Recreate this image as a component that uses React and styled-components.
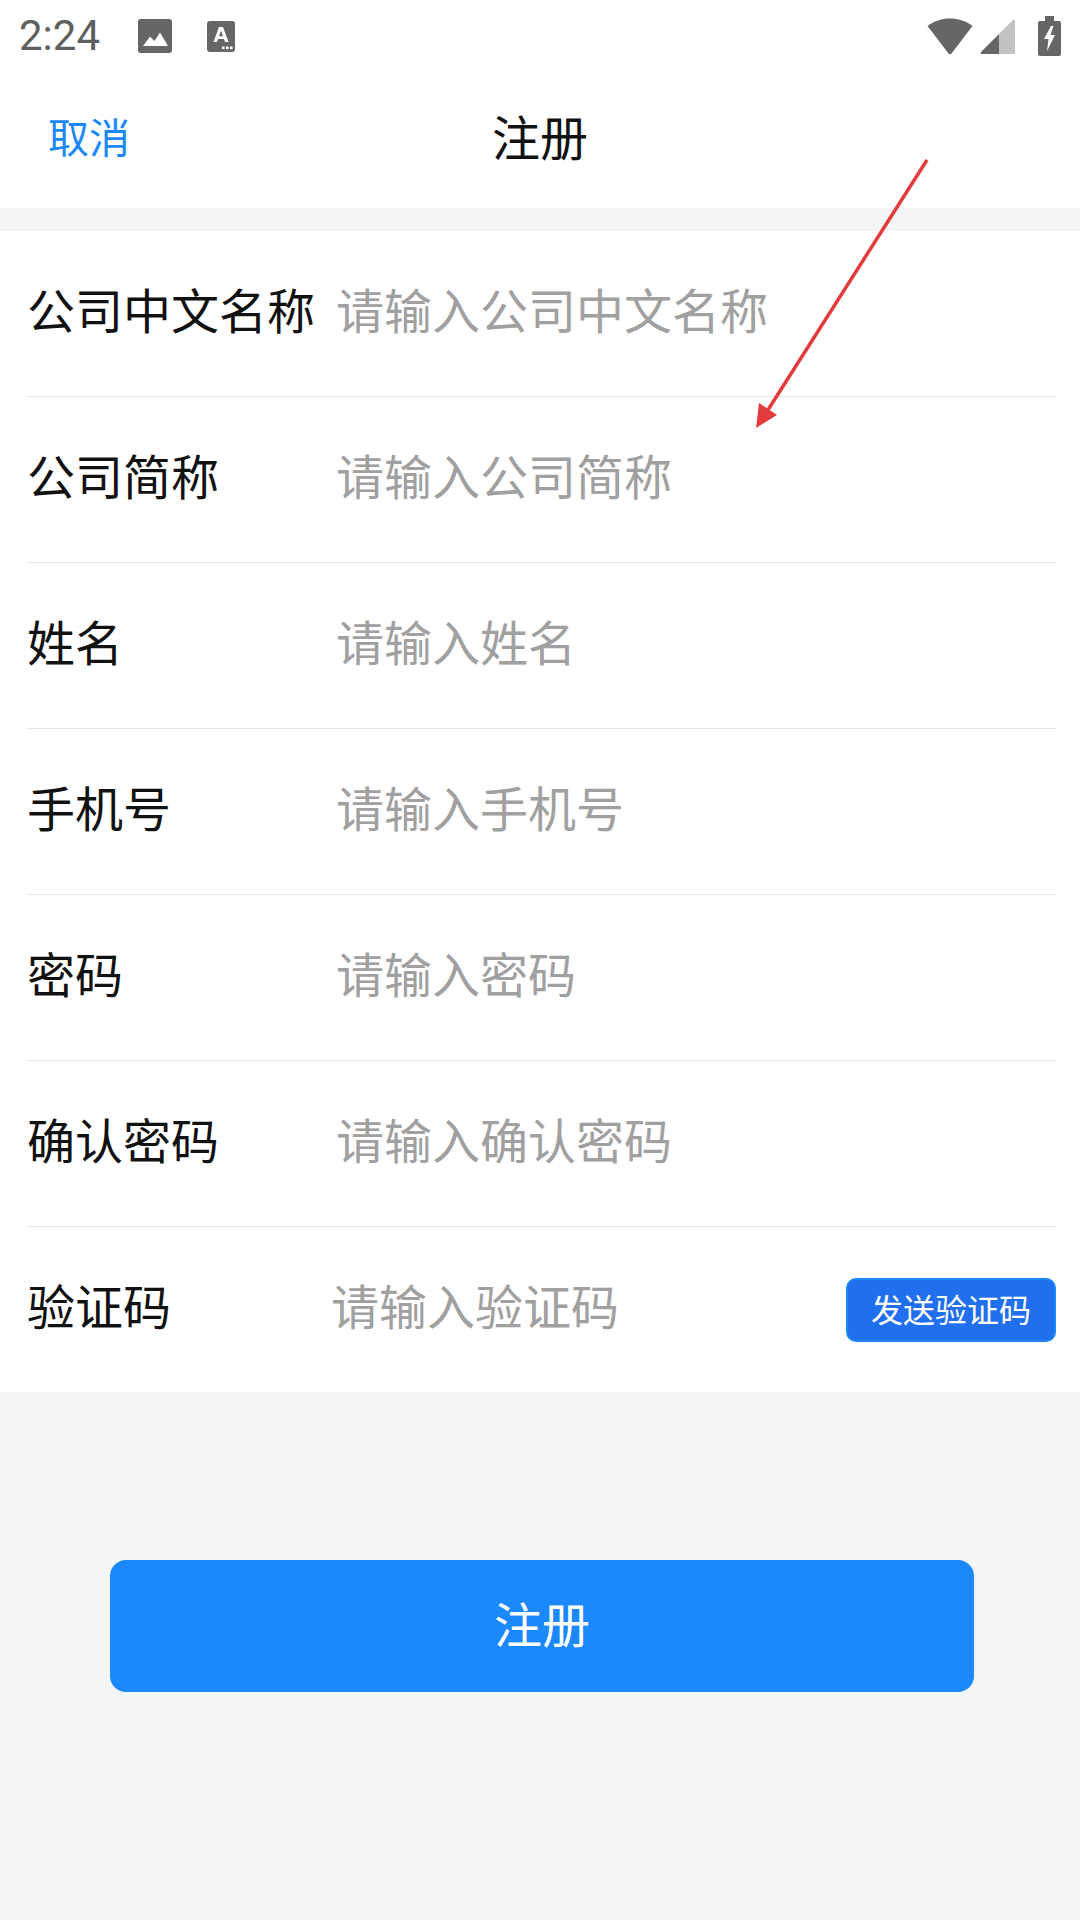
import React from "react";
import styled, { createGlobalStyle } from "styled-components";

const GlobalStyle = createGlobalStyle`
  html, body {
    margin: 0;
    padding: 0;
    background: #f3f5f7;
    font-family: "Noto Sans CJK SC", "Noto Sans", sans-serif;
  }
`;

const Page = styled.div`
  position: relative;
  width: 1080px;
  height: 1920px;
  overflow: hidden;
  background: #f3f5f7;
`;

const StatusBar = styled.div`
  height: 68px;
  box-sizing: border-box;
  padding: 4px 19px 0 19px;
  background: #fff;
  display: flex;
  align-items: center;
  color: #5f5f5f;
`;

const Time = styled.span`
  font-family: Roboto, sans-serif;
  font-size: 42px;
  font-weight: 400;
  line-height: 60px;
  width: 119px;
`;

const StatusIcons = styled.div`
  display: flex;
  align-items: center;
  gap: ${(p) => p.$gap || 0}px;
  margin-left: ${(p) => p.$left || 0};
`;

const NavBar = styled.div`
  height: 140px;
  box-sizing: border-box;
  padding: 0 48px 6px;
  background: #fff;
  display: grid;
  grid-template-columns: 1fr auto 1fr;
  align-items: center;
`;

const Cancel = styled.span`
  font-size: 41px;
  color: #1b88f8;
  line-height: 1;
`;

const Title = styled.span`
  font-size: 48px;
  color: #111;
  line-height: 1;
`;

const Form = styled.div`
  margin-top: 23px;
  background: #fff;
  padding: 0 24px 0 27px;
`;

const Row = styled.div`
  height: ${(p) => (p.$last ? 165 : 166)}px;
  box-sizing: border-box;
  display: flex;
  align-items: center;
  border-bottom: ${(p) => (p.$last ? "none" : "1px solid #e6e6e6")};
`;

const Label = styled.span`
  width: ${(p) => (p.$code ? 304 : 309)}px;
  flex-shrink: 0;
  padding-bottom: 11px;
  font-size: 48px;
  color: #111;
  white-space: nowrap;
`;

const Placeholder = styled.span`
  flex: 1;
  padding-bottom: 11px;
  font-size: 48px;
  color: #a0a0a0;
  white-space: nowrap;
`;

const SendButton = styled.div`
  width: 210px;
  height: 64px;
  box-sizing: border-box;
  padding-bottom: 4px;
  border: 2px solid #1b88f8;
  border-radius: 10px;
  background: #1f6fee;
  color: #fff;
  font-size: 32px;
  display: flex;
  align-items: center;
  justify-content: center;
`;

const SubmitButton = styled.div`
  width: 864px;
  height: 132px;
  box-sizing: border-box;
  padding-bottom: 8px;
  margin: 168px 0 0 110px;
  border-radius: 16px;
  background: #1b88fb;
  color: #fff;
  font-size: 48px;
  display: flex;
  align-items: center;
  justify-content: center;
`;

const ArrowLayer = styled.svg`
  position: absolute;
  left: 0;
  top: 0;
  pointer-events: none;
`;

const rows = [
  { label: "公司中文名称", hint: "请输入公司中文名称" },
  { label: "公司简称", hint: "请输入公司简称" },
  { label: "姓名", hint: "请输入姓名" },
  { label: "手机号", hint: "请输入手机号" },
  { label: "密码", hint: "请输入密码" },
  { label: "确认密码", hint: "请输入确认密码" },
];

const ImageIcon = () => (
  <svg width="34" height="34" viewBox="0 0 34 34">
    <rect width="34" height="34" rx="3" fill="#666" />
    <path d="M5 27 L12 17.5 L16.5 22 L22 13.5 L30 27 Z" fill="#fff" />
  </svg>
);

const KeyboardIcon = () => (
  <svg width="28" height="31" viewBox="0 0 28 31">
    <rect width="28" height="31" rx="3" fill="#666" />
    <path
      d="M6.5 21 L12 6 H16 L21.5 21 H18 L17 18 H11 L10 21 Z M12 15.3 H16 L14 9.6 Z"
      fill="#fff"
      fillRule="evenodd"
    />
    <rect x="15" y="25.5" width="2.6" height="2.6" fill="#fff" />
    <rect x="19" y="25.5" width="2.6" height="2.6" fill="#fff" />
    <rect x="23" y="25.5" width="2.6" height="2.6" fill="#fff" />
  </svg>
);

const WifiIcon = () => (
  <svg width="46" height="37" viewBox="0 0 46 37">
    <path
      d="M0.5 8 C13 -2 33 -2 45.5 8 L24.5 35.5 Q23 37 21.5 35.5 Z"
      fill="#666"
    />
  </svg>
);

const SignalIcon = () => (
  <svg width="35" height="35" viewBox="0 0 35 35">
    <path d="M19 15 L33 1 Q35 0 35 3 V35 H19 Z" fill="#c2c2c2" />
    <path d="M19 15 V35 H2 Q0 35 1 33 Z" fill="#666" />
  </svg>
);

const BatteryIcon = () => (
  <svg width="23" height="40" viewBox="0 0 23 40">
    <path
      d="M7 0 H16 V5 H21 Q23 5 23 7 V38 Q23 40 21 40 H2 Q0 40 0 38 V7 Q0 5 2 5 H7 Z"
      fill="#666"
    />
    <path d="M13 10 L6 23 H10.5 L9 35 L17 19 H12.5 L15.5 10 Z" fill="#fff" />
  </svg>
);

const App = () => {
  return (
    <Page>
      <GlobalStyle />
      <StatusBar>
        <Time>2:24</Time>
        <StatusIcons $gap={35}>
          <ImageIcon />
          <KeyboardIcon />
        </StatusIcons>
        <StatusIcons $gap={7} $left="auto">
          <WifiIcon />
          <SignalIcon />
          <StatusIcons $left="16px">
            <BatteryIcon />
          </StatusIcons>
        </StatusIcons>
      </StatusBar>
      <NavBar>
        <Cancel>取消</Cancel>
        <Title>注册</Title>
      </NavBar>
      <Form>
        {rows.map((row) => (
          <Row key={row.label}>
            <Label>{row.label}</Label>
            <Placeholder>{row.hint}</Placeholder>
          </Row>
        ))}
        <Row $last>
          <Label $code>验证码</Label>
          <Placeholder>请输入验证码</Placeholder>
          <SendButton>发送验证码</SendButton>
        </Row>
      </Form>
      <SubmitButton>注册</SubmitButton>
      <ArrowLayer width="1080" height="1920" viewBox="0 0 1080 1920">
        <line x1="927" y1="160" x2="766" y2="413" stroke="#e23b3e" strokeWidth="3.5" />
        <path d="M756 428 L759 403 L777 415 Z" fill="#e23b3e" />
      </ArrowLayer>
    </Page>
  );
};

export default App;
